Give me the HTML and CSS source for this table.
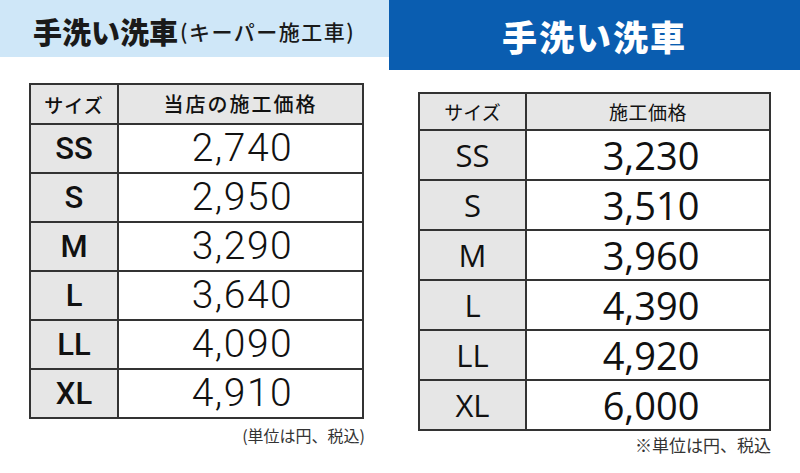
FILE: index.html
```html
<!DOCTYPE html>
<html lang="ja">
<head>
<meta charset="utf-8">
<title>手洗い洗車 料金表</title>
<link rel="stylesheet" href="styles.css">
</head>
<body>
<div class="page">
  <section class="panel panel-left">
    <div class="band band-light">
      <h1 class="title-left">手洗い洗車<span class="sub">(キーパー施工車)</span></h1>
    </div>
    <div class="grid grid-left">
      <div class="cell head">サイズ</div>
      <div class="cell head head-wide">当店の施工価格</div>
      <div class="cell size">SS</div><div class="cell price">2,740</div>
      <div class="cell size">S</div><div class="cell price">2,950</div>
      <div class="cell size">M</div><div class="cell price">3,290</div>
      <div class="cell size">L</div><div class="cell price">3,640</div>
      <div class="cell size">LL</div><div class="cell price">4,090</div>
      <div class="cell size">XL</div><div class="cell price">4,910</div>
    </div>
    <p class="note note-left">(単位は円、税込)</p>
  </section>
  <section class="panel panel-right">
    <div class="band band-dark">
      <h1 class="title-right">手洗い洗車</h1>
    </div>
    <div class="grid grid-right">
      <div class="cell head">サイズ</div>
      <div class="cell head head-wide">施工価格</div>
      <div class="cell size">SS</div><div class="cell price">3,230</div>
      <div class="cell size">S</div><div class="cell price">3,510</div>
      <div class="cell size">M</div><div class="cell price">3,960</div>
      <div class="cell size">L</div><div class="cell price">4,390</div>
      <div class="cell size">LL</div><div class="cell price">4,920</div>
      <div class="cell size">XL</div><div class="cell price">6,000</div>
    </div>
    <p class="note note-right">※単位は円、税込</p>
  </section>
</div>
</body>
</html>
```

FILE: styles.css
```css
html, body {
  margin: 0;
  padding: 0;
  background: #ffffff;
}
body {
  width: 800px;
  height: 473px;
  overflow: hidden;
  font-family: "Noto Sans CJK JP", "Noto Sans", sans-serif;
  color: #111111;
}
.page {
  display: flex;
  width: 800px;
  height: 473px;
}
.panel {
  display: flex;
  flex-direction: column;
}
.panel-left {
  width: 389px;
}
.panel-right {
  width: 411px;
}
.band {
  display: flex;
  align-items: center;
}
.band-light {
  height: 57px;
  background: #cfe7f8;
  padding-left: 33px;
}
.band-dark {
  height: 70px;
  background: #0a5db0;
  justify-content: center;
}
.title-left {
  margin: 6px 0 0 0;
  font-size: 29px;
  font-weight: 900;
  line-height: 1;
  color: #1a1a1a;
  display: flex;
  align-items: center;
}
.title-left .sub {
  font-size: 21px;
  font-weight: 500;
  margin-left: 2px;
  letter-spacing: 1.5px;
}
.title-right {
  margin: 0;
  font-size: 35px;
  font-weight: 900;
  line-height: 1;
  color: #ffffff;
  letter-spacing: 2px;
}
.grid {
  display: grid;
  background: #333333;
  padding: 2px;
  gap: 2px;
}
.grid-left {
  margin: 26px 0 0 29px;
  width: 331px;
  grid-template-columns: 86px 243px;
  grid-template-rows: 38px repeat(6, 47px);
}
.grid-right {
  margin: 22px 0 0 29px;
  width: 349px;
  grid-template-columns: 105px 242px;
  grid-template-rows: 35px repeat(6, 48px);
}
.cell {
  display: flex;
  align-items: center;
  justify-content: center;
  background: #ffffff;
  line-height: 1;
}
.cell.head,
.cell.size {
  background: #e6e6e6;
}
.grid-left .head {
  font-size: 19px;
  font-weight: 500;
  letter-spacing: 1px;
}
.grid-left .head-wide {
  font-size: 20px;
  letter-spacing: 2px;
}
.grid-left .size {
  font-family: "Roboto", "Noto Sans", sans-serif;
  font-size: 31px;
  font-weight: 500;
}
.grid-left .price {
  font-family: "Roboto", "Noto Sans", sans-serif;
  font-size: 39px;
  font-weight: 300;
  letter-spacing: 1.5px;
  padding-left: 4px;
}
.grid-right .head {
  font-size: 19px;
  font-weight: 400;
}
.grid-right .head-wide {
  font-size: 19px;
  letter-spacing: 0.5px;
}
.grid-right .size {
  font-family: "Open Sans", "Noto Sans", sans-serif;
  font-size: 31px;
  font-weight: 400;
}
.grid-right .price {
  font-family: "Open Sans", "Noto Sans", sans-serif;
  font-size: 38px;
  font-weight: 400;
  padding-left: 6px;
}
.note {
  margin: 0;
  text-align: right;
  color: #333333;
}
.note-left {
  width: 336px;
  margin: 6px 0 0 29px;
  font-size: 16px;
  line-height: 20px;
}
.note-right {
  width: 353px;
  margin: 3px 0 0 29px;
  font-size: 17px;
  line-height: 22px;
}
```
